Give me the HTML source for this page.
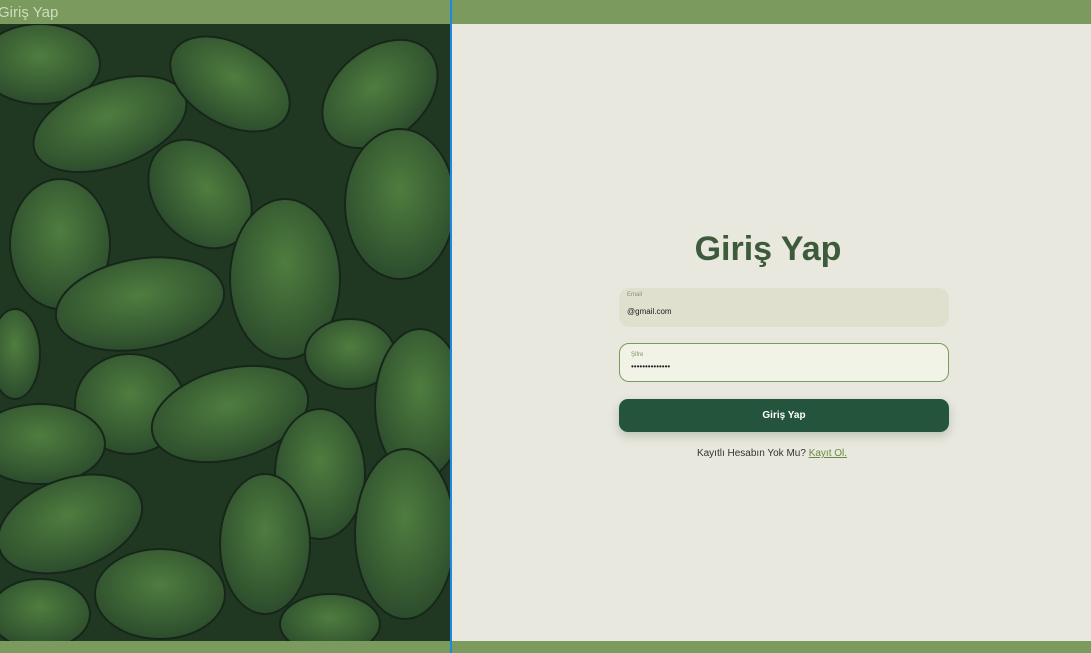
<!DOCTYPE html>
<html><head><meta charset="utf-8"><style>
*{margin:0;padding:0;box-sizing:border-box}
body{width:1091px;height:653px;background:#7b9a5e;position:relative;overflow:hidden;font-family:"Liberation Sans",sans-serif}
.title{position:absolute;left:-2px;top:4px;color:#cfdcbf;font-size:15px}
.img{position:absolute;left:0;top:24px;width:450px;height:617px;background:#1f3320;overflow:hidden}
.bl{position:absolute;left:450px;top:0;width:2px;height:653px;background:#1e88e5}
.panel{position:absolute;left:452px;top:24px;width:639px;height:617px;background:#e8e8df}
h1{position:absolute;left:0;width:632px;text-align:center;top:206px;font-size:34px;color:#3d5a3a;font-weight:bold}
.f{position:absolute;left:167px;width:330px;height:39px;border-radius:10px}
.f1{top:264px;background:#dfe1ce}
.f2{top:319px;background:#f1f3e6;border:1px solid #7b9a5e}
.lab{position:absolute;left:8px;top:4px;font-size:6px;color:#8a8f7c}
.v{position:absolute;left:8px;top:19px;font-size:8px;color:#222}
.btn{position:absolute;left:167px;top:375px;width:330px;height:33px;border-radius:9px;background:#24553c;color:#fff;font-size:10px;font-weight:bold;text-align:center;line-height:33px;box-shadow:0 4px 10px rgba(60,80,50,.25)}
.q{position:absolute;left:0;width:640px;text-align:center;top:424px;font-size:10px;color:#333}
.q u{color:#6a8a3e}
</style></head><body>
<div class="title">Giriş Yap</div>
<div class="img"><svg width="450" height="617" viewBox="0 0 450 617">
<defs><radialGradient id="g" cx="50%" cy="40%" r="60%"><stop offset="0" stop-color="#4f7d3f"/><stop offset="1" stop-color="#2c4c2c"/></radialGradient></defs>
<rect width="450" height="617" fill="#203822"/>
<g fill="url(#g)" stroke="#16261a" stroke-width="2">
<ellipse cx="40" cy="40" rx="60" ry="40"/>
<ellipse cx="110" cy="100" rx="80" ry="42" transform="rotate(-20 110 100)"/>
<ellipse cx="230" cy="60" rx="65" ry="40" transform="rotate(30 230 60)"/>
<ellipse cx="380" cy="70" rx="65" ry="45" transform="rotate(-40 380 70)"/>
<ellipse cx="60" cy="220" rx="50" ry="65"/>
<ellipse cx="200" cy="170" rx="60" ry="45" transform="rotate(50 200 170)"/>
<ellipse cx="400" cy="180" rx="55" ry="75"/>
<ellipse cx="285" cy="255" rx="55" ry="80"/>
<ellipse cx="140" cy="280" rx="85" ry="45" transform="rotate(-10 140 280)"/>
<ellipse cx="350" cy="330" rx="45" ry="35"/>
<ellipse cx="15" cy="330" rx="25" ry="45"/>
<ellipse cx="420" cy="380" rx="45" ry="75"/>
<ellipse cx="130" cy="380" rx="55" ry="50"/>
<ellipse cx="230" cy="390" rx="80" ry="45" transform="rotate(-15 230 390)"/>
<ellipse cx="40" cy="420" rx="65" ry="40"/>
<ellipse cx="320" cy="450" rx="45" ry="65"/>
<ellipse cx="70" cy="500" rx="75" ry="45" transform="rotate(-20 70 500)"/>
<ellipse cx="265" cy="520" rx="45" ry="70"/>
<ellipse cx="405" cy="510" rx="50" ry="85"/>
<ellipse cx="160" cy="570" rx="65" ry="45"/>
<ellipse cx="40" cy="590" rx="50" ry="35"/>
<ellipse cx="330" cy="600" rx="50" ry="30"/>
</g></svg></div>
<div class="bl"></div>
<div class="panel">
<h1>Giriş Yap</h1>
<div class="f f1"><div class="lab">Email</div><div class="v">@gmail.com</div></div>
<div class="f f2"><div class="lab" style="left:11px;top:8px;color:#7b9a5e">Şifre</div><div class="v" style="left:11px;top:18px">••••••••••••••</div></div>
<div class="btn">Giriş Yap</div>
<div class="q">Kayıtlı Hesabın Yok Mu? <u>Kayıt Ol.</u></div>
</div>
</body></html>
